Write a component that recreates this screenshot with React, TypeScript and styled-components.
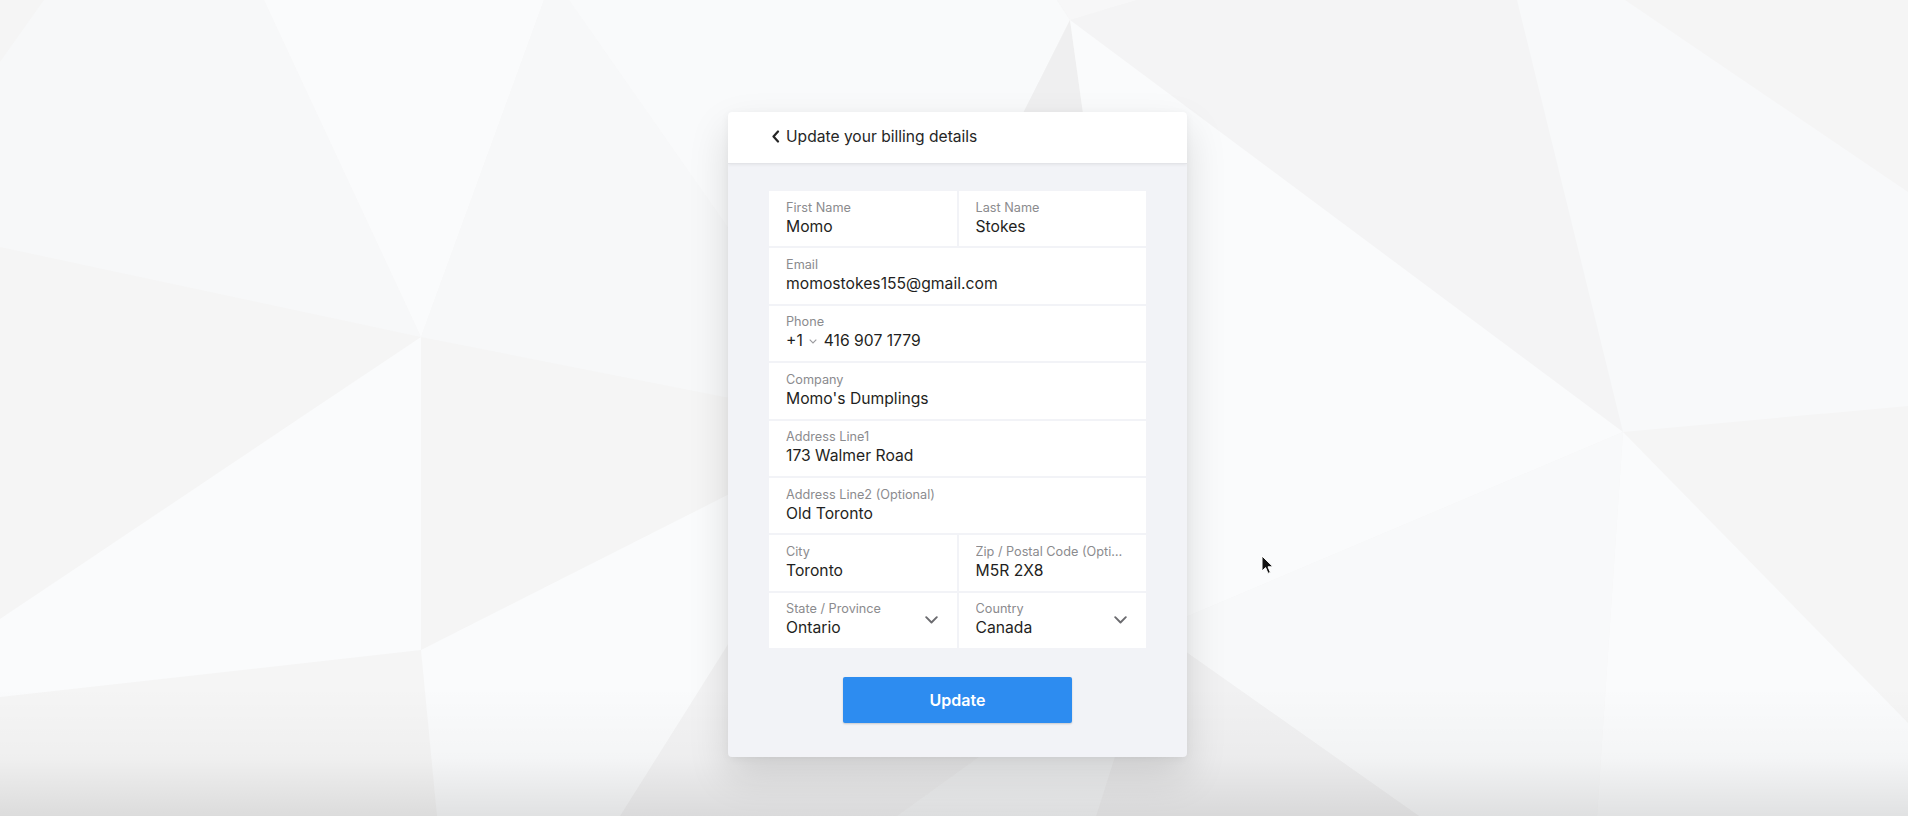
import React from "react";
import styled, { createGlobalStyle } from "styled-components";

interface Field {
  label: string;
  value: string;
  wide?: boolean;
  select?: boolean;
  phone?: boolean;
}

const fields: Field[] = [
  { label: "First Name", value: "Momo" },
  { label: "Last Name", value: "Stokes" },
  { label: "Email", value: "momostokes155@gmail.com", wide: true },
  { label: "Phone", value: "416 907 1779", wide: true, phone: true },
  { label: "Company", value: "Momo's Dumplings", wide: true },
  { label: "Address Line1", value: "173 Walmer Road", wide: true },
  { label: "Address Line2 (Optional)", value: "Old Toronto", wide: true },
  { label: "City", value: "Toronto" },
  { label: "Zip / Postal Code (Optional)", value: "M5R 2X8" },
  { label: "State / Province", value: "Ontario", select: true },
  { label: "Country", value: "Canada", select: true }
];

// background facets: [points, fill]
const facets: [string, string][] = [
  ["0,62 44,0 264,0 421,337 0,247", "#f7f8f9"],
  ["264,0 544,0 421,337", "#fafbfc"],
  ["544,0 569,0 866,425 421,337", "#f7f8f9"],
  ["569,0 1057,0 1070,20 866,425", "#f9fafb"],
  ["1057,0 1137,0 1070,20", "#f7f7f8"],
  ["1070,20 1137,0 1517,0 1623,432", "#f4f4f5"],
  ["1517,0 1625,0 1908,192 1908,406 1623,432", "#f8f9fa"],
  ["1623,432 1908,723 1908,816 1597,816", "#fafbfc"],
  ["1070,20 866,425 1155,630", "#efeff0"],
  ["1070,20 1623,432 1155,630", "#fafbfc"],
  ["1623,432 1155,630 1419,816 1597,816", "#f8f9fa"],
  ["1155,630 1096,816 1419,816", "#f1f1f2"],
  ["1155,630 897,816 1096,816", "#f6f7f8"],
  ["866,425 620,816 897,816 1155,630", "#f3f3f4"],
  ["0,619 421,337 421,650 0,697", "#fafbfc"],
  ["421,650 866,425 620,816 437,816", "#fafbfc"]
];

const GlobalStyle = createGlobalStyle`
  body {
    margin: 0;
    font-family: Inter, "Noto Sans", "Liberation Sans", sans-serif;
    -webkit-font-smoothing: antialiased;
  }
`;

const Page = styled.div`
  position: relative;
  min-height: 816px;
  box-sizing: border-box;
  display: flex;
  justify-content: center;
  align-items: flex-start;
  padding-top: 112px;
  overflow: hidden;
  background: #f5f5f5;
`;

const Backdrop = styled.svg`
  position: absolute;
  inset: 0;
  width: 100%;
  height: 100%;
`;

const Shade = styled.div`
  position: absolute;
  left: 0;
  right: 0;
  bottom: 0;
  height: 130px;
  background: linear-gradient(
    to bottom,
    rgba(0, 0, 0, 0) 0%,
    rgba(0, 0, 0, 0.025) 55%,
    rgba(0, 0, 0, 0.1) 100%
  );
`;

const Card = styled.div`
  position: relative;
  z-index: 1;
  width: 459px;
  margin-left: 7px;
  border-radius: 4px;
  overflow: hidden;
  background: #f2f3f7;
  box-shadow: 0 18px 40px rgba(0, 0, 0, 0.13), 0 2px 8px rgba(0, 0, 0, 0.05);
`;

const Header = styled.div`
  height: 52px;
  box-sizing: border-box;
  display: flex;
  align-items: center;
  gap: 6px;
  padding-left: 43px;
  padding-bottom: 2px;
  background: #ffffff;
  border-bottom: 1px solid #e3e4e8;
  box-shadow: 0 1px 3px rgba(0, 0, 0, 0.06);
  font-size: 15.6px;
  color: #262626;
`;

const Body = styled.div`
  padding: 27px 41px 34px;
`;

const Fields = styled.div`
  display: grid;
  grid-template-columns: 1fr 1fr;
  grid-auto-rows: 55.4px;
  gap: 2px;
`;

const Cell = styled.div<{ $wide?: boolean }>`
  grid-column: ${(p) => (p.$wide ? "span 2" : "span 1")};
  display: flex;
  align-items: center;
  gap: 8px;
  padding: 0 18px 0 17px;
  background: #ffffff;
  min-width: 0;
`;

const Content = styled.div`
  flex: 1;
  min-width: 0;
  margin-top: -1px;
`;

const Label = styled.div`
  font-size: 12.7px;
  line-height: 15px;
  color: #8b8b8e;
  white-space: nowrap;
  overflow: hidden;
  text-overflow: ellipsis;
`;

const Value = styled.div`
  display: flex;
  align-items: center;
  margin-top: 2px;
  font-size: 15.7px;
  line-height: 20px;
  color: #1f1f22;
`;

const Caret = styled.svg`
  flex: none;
  width: 13px;
  height: 8px;
  margin-right: 1px;
`;

const SmallCaret = styled.svg`
  width: 8px;
  height: 5px;
  margin: 1px 7px 0 6px;
`;

const Button = styled.button`
  display: block;
  width: 229px;
  height: 46px;
  margin: 29px auto 0;
  border: none;
  border-radius: 2px;
  background: #2d8cf0;
  color: #ffffff;
  font-family: inherit;
  font-size: 16px;
  font-weight: 600;
  box-shadow: 0 1px 2px rgba(0, 0, 0, 0.18);
  cursor: pointer;
`;

const Pointer = styled.svg`
  position: absolute;
  z-index: 2;
  left: 1261px;
  top: 555px;
  width: 13px;
  height: 20px;
`;

const App = () => {
  return (
    <Page>
      <GlobalStyle />
      <Backdrop viewBox="0 0 1908 816" preserveAspectRatio="none">
        {facets.map(([points, fill], i) => (
          <polygon key={i} points={points} fill={fill} />
        ))}
      </Backdrop>
      <Shade />

      <Card>
        <Header>
          <svg width="9" height="13" viewBox="0 0 9 13">
            <polyline
              points="7,1.5 2.5,6.5 7,11.5"
              fill="none"
              stroke="#262626"
              strokeWidth="2.2"
              strokeLinecap="round"
              strokeLinejoin="round"
            />
          </svg>
          Update your billing details
        </Header>

        <Body>
          <Fields>
            {fields.map((f) => (
              <Cell key={f.label} $wide={f.wide}>
                <Content>
                  <Label>{f.label}</Label>
                  <Value>
                    {f.phone && (
                      <>
                        +1
                        <SmallCaret viewBox="0 0 8 5">
                          <polyline
                            points="0.7,0.7 4,4 7.3,0.7"
                            fill="none"
                            stroke="#9a9a9e"
                            strokeWidth="1.1"
                          />
                        </SmallCaret>
                      </>
                    )}
                    {f.value}
                  </Value>
                </Content>
                {f.select && (
                  <Caret viewBox="0 0 13 8">
                    <polyline
                      points="1.2,1.2 6.5,6.5 11.8,1.2"
                      fill="none"
                      stroke="#6b6b6f"
                      strokeWidth="1.9"
                      strokeLinecap="round"
                      strokeLinejoin="round"
                    />
                  </Caret>
                )}
              </Cell>
            ))}
          </Fields>
          <Button>Update</Button>
        </Body>
      </Card>

      <Pointer viewBox="0 0 13 20">
        <path
          d="M1 1 L1 16 L4.6 12.6 L7 18.4 L9.4 17.4 L7 11.8 L12 11.8 Z"
          fill="#111"
          stroke="#fff"
          strokeWidth="1"
          strokeLinejoin="round"
        />
      </Pointer>
    </Page>
  );
};

export default App;
